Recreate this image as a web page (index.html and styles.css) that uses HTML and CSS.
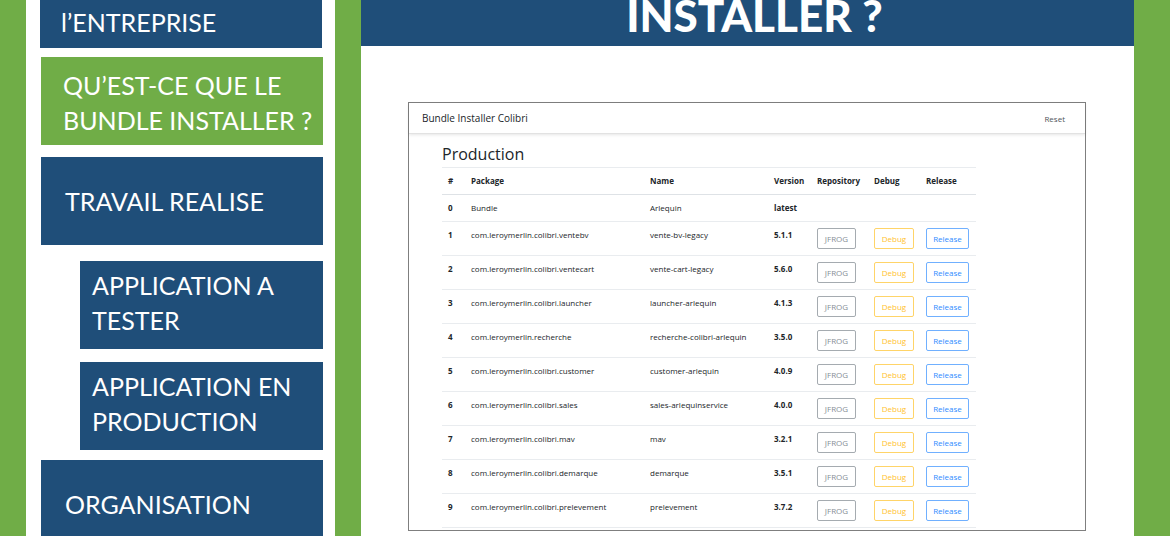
FILE: index.html
```html
<!DOCTYPE html>
<html lang="fr">
<head>
<meta charset="utf-8">
<title>Bundle Installer</title>
<link rel="stylesheet" href="styles.css">
</head>
<body>
<div class="slide">
  <nav class="sidebar">
    <a class="item item-first" href="#entreprise">l’ENTREPRISE</a>
    <a class="item item-active" href="#bundle" aria-current="page">QU’EST-CE QUE LE<br>BUNDLE INSTALLER ?</a>
    <a class="item" href="#travail">TRAVAIL REALISE</a>
    <div class="subitems">
      <a class="item item-sub" href="#tester">APPLICATION A TESTER</a>
      <a class="item item-sub" href="#production">APPLICATION EN PRODUCTION</a>
    </div>
    <a class="item" href="#organisation">ORGANISATION</a>
  </nav>
  <main class="content">
    <header class="banner"><h1 class="banner-title">INSTALLER ?</h1></header>
    <section class="window">
      <header class="navbar">
        <span class="brand">Bundle Installer Colibri</span>
        <a class="reset" href="#reset">Reset</a>
      </header>
      <div class="window-body">
        <h2 class="section-title">Production</h2>
        <table class="packages">
          <colgroup><col class="c-num"><col class="c-package"><col class="c-name"><col class="c-version"><col class="c-repo"><col class="c-debug"><col class="c-release"></colgroup>
          <thead><tr><th>#</th><th>Package</th><th>Name</th><th>Version</th><th>Repository</th><th>Debug</th><th>Release</th></tr></thead>
          <tbody>
            <tr><th>0</th><td>Bundle</td><td>Arlequin</td><th>latest</th><td></td><td></td><td></td></tr>
            <tr><th>1</th><td>com.leroymerlin.colibri.ventebv</td><td>vente-bv-legacy</td><th>5.1.1</th><td><button class="btn gray">JFROG</button></td><td><button class="btn amber">Debug</button></td><td><button class="btn blue">Release</button></td></tr>
            <tr><th>2</th><td>com.leroymerlin.colibri.ventecart</td><td>vente-cart-legacy</td><th>5.6.0</th><td><button class="btn gray">JFROG</button></td><td><button class="btn amber">Debug</button></td><td><button class="btn blue">Release</button></td></tr>
            <tr><th>3</th><td>com.leroymerlin.colibri.launcher</td><td>launcher-arlequin</td><th>4.1.3</th><td><button class="btn gray">JFROG</button></td><td><button class="btn amber">Debug</button></td><td><button class="btn blue">Release</button></td></tr>
            <tr><th>4</th><td>com.leroymerlin.recherche</td><td>recherche-colibri-arlequin</td><th>3.5.0</th><td><button class="btn gray">JFROG</button></td><td><button class="btn amber">Debug</button></td><td><button class="btn blue">Release</button></td></tr>
            <tr><th>5</th><td>com.leroymerlin.colibri.customer</td><td>customer-arlequin</td><th>4.0.9</th><td><button class="btn gray">JFROG</button></td><td><button class="btn amber">Debug</button></td><td><button class="btn blue">Release</button></td></tr>
            <tr><th>6</th><td>com.leroymerlin.colibri.sales</td><td>sales-arlequinservice</td><th>4.0.0</th><td><button class="btn gray">JFROG</button></td><td><button class="btn amber">Debug</button></td><td><button class="btn blue">Release</button></td></tr>
            <tr><th>7</th><td>com.leroymerlin.colibri.mav</td><td>mav</td><th>3.2.1</th><td><button class="btn gray">JFROG</button></td><td><button class="btn amber">Debug</button></td><td><button class="btn blue">Release</button></td></tr>
            <tr><th>8</th><td>com.leroymerlin.colibri.demarque</td><td>demarque</td><th>3.5.1</th><td><button class="btn gray">JFROG</button></td><td><button class="btn amber">Debug</button></td><td><button class="btn blue">Release</button></td></tr>
            <tr><th>9</th><td>com.leroymerlin.colibri.prelevement</td><td>prelevement</td><th>3.7.2</th><td><button class="btn gray">JFROG</button></td><td><button class="btn amber">Debug</button></td><td><button class="btn blue">Release</button></td></tr>
          </tbody>
        </table>
      </div>
    </section>
  </main>
</div>
</body>
</html>
```
FILE: styles.css
```css
* { box-sizing: border-box; }
body { margin: 0; background: #70ad47; font-family: "Open Sans", "Noto Sans", sans-serif; }
.slide { display: flex; gap: 26px; height: 100vh; padding: 0 36px 0 26px; overflow: hidden; }

.sidebar { flex: 0 0 309px; display: flex; flex-direction: column; padding: 0 12px 0 15px; background: #fff; }
.item {
  display: flex; align-items: center; flex: none; height: 88px; margin-top: 12px; padding: 0 10px 0 24px;
  background: #1f4e79; color: #fff; text-decoration: none;
  font-family: Lato, sans-serif; font-size: 25px; line-height: 35px; white-space: nowrap;
}
.item-first { height: 48px; margin: 0 1px 0 -1px; padding: 0 21px 4px; }
.item-active { margin-top: 9px; padding: 3px 0 0 22px; background: #70ad47; }
.subitems { display: flex; flex-direction: column; gap: 13px; margin: 16px 0 -2px 39px; }
.item-sub { margin: 0; padding: 0 20px 5px 12px; white-space: normal; }

.content { flex: 1; min-width: 0; background: #fff; }
.banner { padding: 0 0 15px 14px; background: #1f4e79; }
.banner-title { margin: 0; color: #fff; font-family: Lato, sans-serif; font-size: 44px; line-height: 31px; font-weight: 900; text-align: center; }

.window { margin: 56px 48px 0 47px; padding-bottom: 2px; border: 1px solid #7f7f7f; color: #212529; }
.navbar { display: flex; align-items: center; justify-content: space-between; height: 31px; padding: 0 20px 0 13px; border-bottom: 1px solid #e2e2e2; box-shadow: 0 1px 3px #0000001a; }
.brand { font-size: 10px; }
.reset { color: #505559; font-size: 8px; text-decoration: none; }
.window-body { padding: 8px 33px 0; }
.section-title { margin: 0; padding-bottom: 1px; font-size: 16px; line-height: 24px; font-weight: 400; }
.packages { width: 534px; table-layout: fixed; border-collapse: collapse; border-bottom: 1px solid #e9ecef; font-size: 8px; line-height: 14px; }
.c-num { width: 23px; }
.c-package { width: 179px; }
.c-name { width: 124px; }
.c-version { width: 43px; }
.c-repo { width: 57px; }
.c-debug { width: 52px; }
.c-release { width: 56px; }
.packages th, .packages td { padding: 6px 0 6px 6px; border-top: 1px solid #e9ecef; text-align: left; vertical-align: top; white-space: nowrap; }
.packages th { font-weight: 700; }
.packages thead th { border-bottom: 1px solid #dee2e6; }
.btn { display: block; height: 21px; padding: 0 6px; border: 1px solid; border-radius: 2px; background: transparent; font-family: inherit; font-size: 8px; line-height: 18px; }
.gray { width: 39px; color: #868e96; border-color: #a5abb0; }
.amber { width: 40px; color: #ffc12e; border-color: #ffd468; }
.blue { width: 43px; color: #2f8cff; border-color: #70b0ff; }
```
